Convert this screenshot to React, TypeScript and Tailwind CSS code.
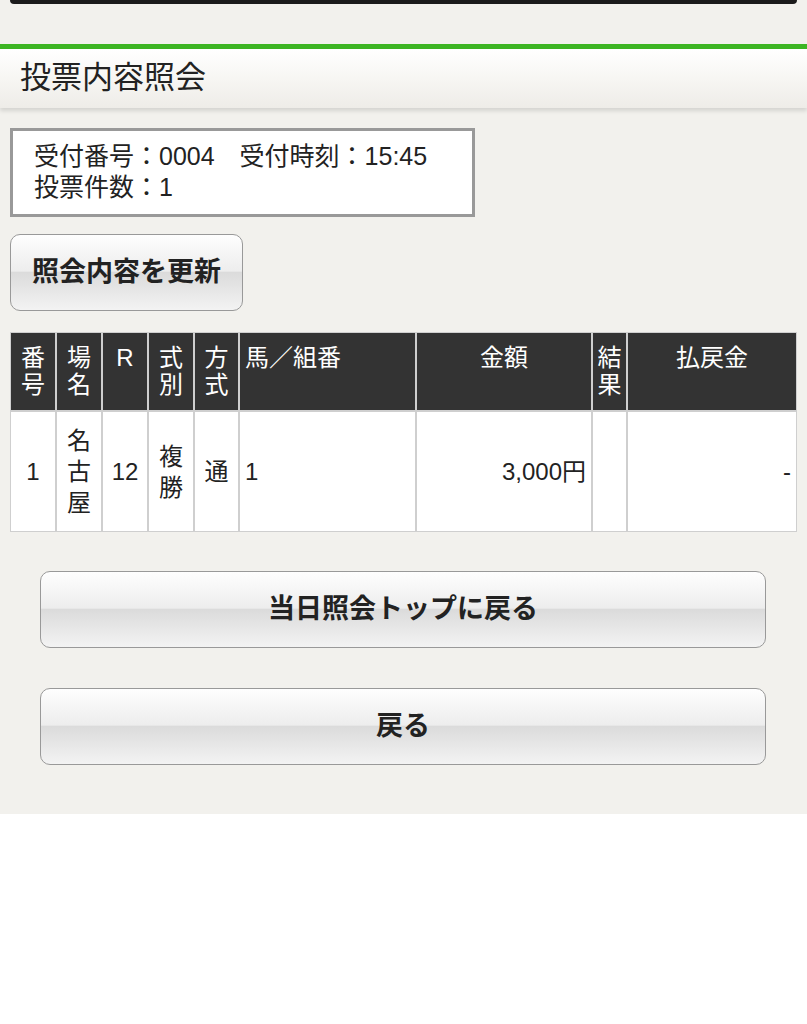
import React from "react"

const font = { fontFamily: '"Liberation Sans", "Noto Sans CJK JP", sans-serif' }

function GlossButton({ children, className }: { children: React.ReactNode; className: string }) {
  return (
    <button
      className={`flex items-center justify-center rounded-[10px] border-[1.5px] border-[#999] bg-[linear-gradient(to_bottom,#fefefe_0%,#ededed_48%,#dbdbdb_50%,#f3f3f3_100%)] text-[27px] font-bold text-[#222] ${className}`}
    >
      {children}
    </button>
  )
}

const th = "bg-[#333] text-white pt-[11px] text-center"
const td = "bg-white flex items-center justify-center"

export default function App() {
  return (
    <div style={font} className="w-[807px] bg-white">
      <div className="bg-[#f2f1ed] pb-[49px] text-[#222]">
        <div className="mx-[10px] h-[4px] rounded-b-[4px] bg-[#1b1b1b]" />
        <div className="mt-[40px] h-[5px] bg-[#3db523]" />
        <div className="flex h-[59px] items-center bg-[linear-gradient(to_bottom,#ffffff_0%,#f7f6f3_50%,#eeece8_100%)] px-[20px] text-[31px] shadow-[0_3px_4px_rgba(0,0,0,0.12)]">
          投票内容照会
        </div>

        <div className="ml-[10px] mt-[20px] h-[89px] w-[465px] border-[3px] border-[#999] bg-white px-[21px] py-[10px] text-[25px] leading-[31px]">
          <p>受付番号：0004　受付時刻：15:45</p>
          <p>投票件数：1</p>
        </div>

        <GlossButton className="ml-[10px] mt-[17px] h-[77px] w-[233px]">照会内容を更新</GlossButton>

        <div className="mx-[10px] mt-[21px] grid grid-cols-[44px_44px_44px_44px_43px_175px_174px_33px_168px] grid-rows-[77px_119px] gap-[2px] bg-[#cfcfcf] p-[1px] text-[24px] leading-[27px]">
          <div className={th}>番<br />号</div>
          <div className={th}>場<br />名</div>
          <div className={th}>R</div>
          <div className={th}>式<br />別</div>
          <div className={th}>方<br />式</div>
          <div className="bg-[#333] px-[5px] pt-[11px] text-white">馬／組番</div>
          <div className={th}>金額</div>
          <div className={th}>結<br />果</div>
          <div className={th}>払戻金</div>

          <div className={`${td} leading-[31px]`}>1</div>
          <div className={`${td} text-center leading-[31px]`}>名<br />古<br />屋</div>
          <div className={`${td} leading-[31px]`}>12</div>
          <div className={`${td} text-center leading-[31px]`}>複<br />勝</div>
          <div className={`${td} leading-[31px]`}>通</div>
          <div className="flex items-center bg-white px-[5px] leading-[31px]">1</div>
          <div className="flex items-center justify-end bg-white px-[5px] leading-[31px]">3,000円</div>
          <div className="bg-white" />
          <div className="flex items-center justify-end bg-white px-[5px] leading-[31px]">-</div>
        </div>

        <GlossButton className="ml-[40px] mt-[39px] h-[77px] w-[726px]">当日照会トップに戻る</GlossButton>
        <GlossButton className="ml-[40px] mt-[40px] h-[77px] w-[726px]">戻る</GlossButton>
      </div>
    </div>
  )
}
